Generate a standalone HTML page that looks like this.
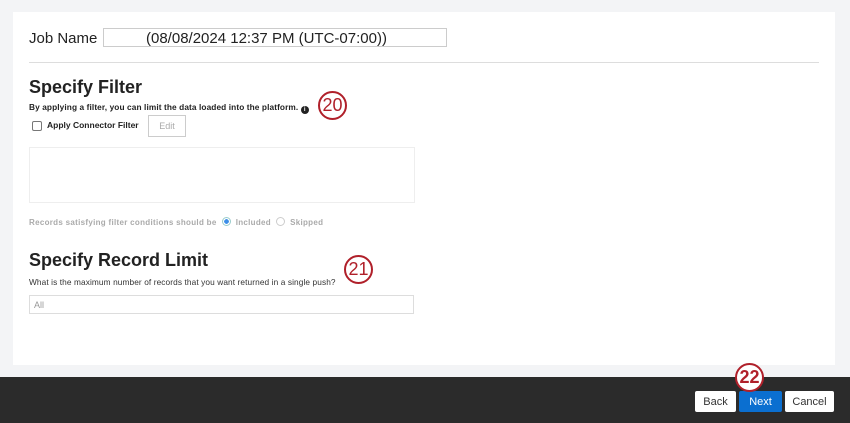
<!DOCTYPE html><html><head><style>
body{margin:0;width:850px;height:423px;background:#f3f4f6;font-family:"Liberation Sans",sans-serif;position:relative;overflow:hidden;color:#222}
.p{position:absolute;left:13px;top:12px;width:822px;height:353px;background:#fff}
.a{position:absolute}
.foot{position:absolute;left:0;top:377px;width:850px;height:46px;background:#2b2b2b}
.btn{position:absolute;top:391px;height:21px;font-size:11px;line-height:23px;text-align:center;background:#fff;color:#333;border-radius:2px}
.c{position:absolute;width:25px;height:25px;border:2px solid #b0202a;border-radius:50%;background:#fff;color:#b0202a;font-size:18px;line-height:25px;text-align:center;box-sizing:content-box}
</style></head><body>
<div class="p"></div>
<div class="a" style="left:29px;top:30px;font-size:15px">Job Name</div>
<div class="a" style="left:103px;top:28px;height:19px;border:1px solid #ccc;font-size:15px;line-height:19px;padding-left:42px;box-sizing:border-box;width:344px">(08/08/2024 12:37 PM (UTC-07:00))</div>
<div class="a" style="left:29px;top:62px;width:790px;height:1px;background:#ddd"></div>
<div class="a" style="left:29px;top:77px;font-size:18px;font-weight:bold;color:#222">Specify Filter</div>
<div class="a" style="left:29px;top:102px;font-size:8.3px;font-weight:bold;letter-spacing:0.1px">By applying a filter, you can limit the data loaded into the platform. <span style="display:inline-block;width:8px;height:8px;border-radius:50%;background:#222;color:#fff;font-size:6px;line-height:8px;text-align:center;vertical-align:-1px">i</span></div>
<div class="a" style="left:32px;top:121px;width:8px;height:8px;border:1px solid #777;border-radius:2px"></div>
<div class="a" style="left:47px;top:120px;font-size:8.5px;font-weight:bold">Apply Connector Filter</div>
<div class="a" style="left:148px;top:115px;width:36px;height:20px;border:1px solid #ccc;font-size:9px;line-height:20px;text-align:center;color:#aaa">Edit</div>
<div class="a" style="left:29px;top:147px;width:384px;height:54px;border:1px solid #eee"></div>
<div class="a" style="left:29px;top:217px;font-size:8px;font-weight:bold;color:#aaa;letter-spacing:0.3px">Records satisfying filter conditions should be &nbsp;<span style="display:inline-block;width:7px;height:7px;border-radius:50%;border:1px solid #9cc;background:radial-gradient(#3c8ee8 45%,#fff 50%);vertical-align:-1px"></span>&nbsp; Included &nbsp;<span style="display:inline-block;width:7px;height:7px;border-radius:50%;border:1px solid #ccc;vertical-align:-1px"></span>&nbsp; Skipped</div>
<div class="a" style="left:29px;top:250px;font-size:18px;font-weight:bold;color:#222">Specify Record Limit</div>
<div class="a" style="left:29px;top:277px;font-size:8.3px;color:#333;letter-spacing:0.1px">What is the maximum number of records that you want returned in a single push?</div>
<div class="a" style="left:29px;top:295px;height:19px;border:1px solid #ddd;font-size:9px;line-height:19px;padding-left:4px;box-sizing:border-box;width:385px;color:#999">All</div>
<div class="c" style="left:318px;top:91px">20</div>
<div class="c" style="left:344px;top:255px">21</div>
<div class="foot"></div>
<div class="btn" style="left:695px;width:41px">Back</div>
<div class="btn" style="left:739px;width:43px;background:#0b6fd0;color:#fff">Next</div>
<div class="btn" style="left:785px;width:49px">Cancel</div>
<div class="c" style="left:735px;top:363px;font-weight:bold">22</div>
</body></html>
